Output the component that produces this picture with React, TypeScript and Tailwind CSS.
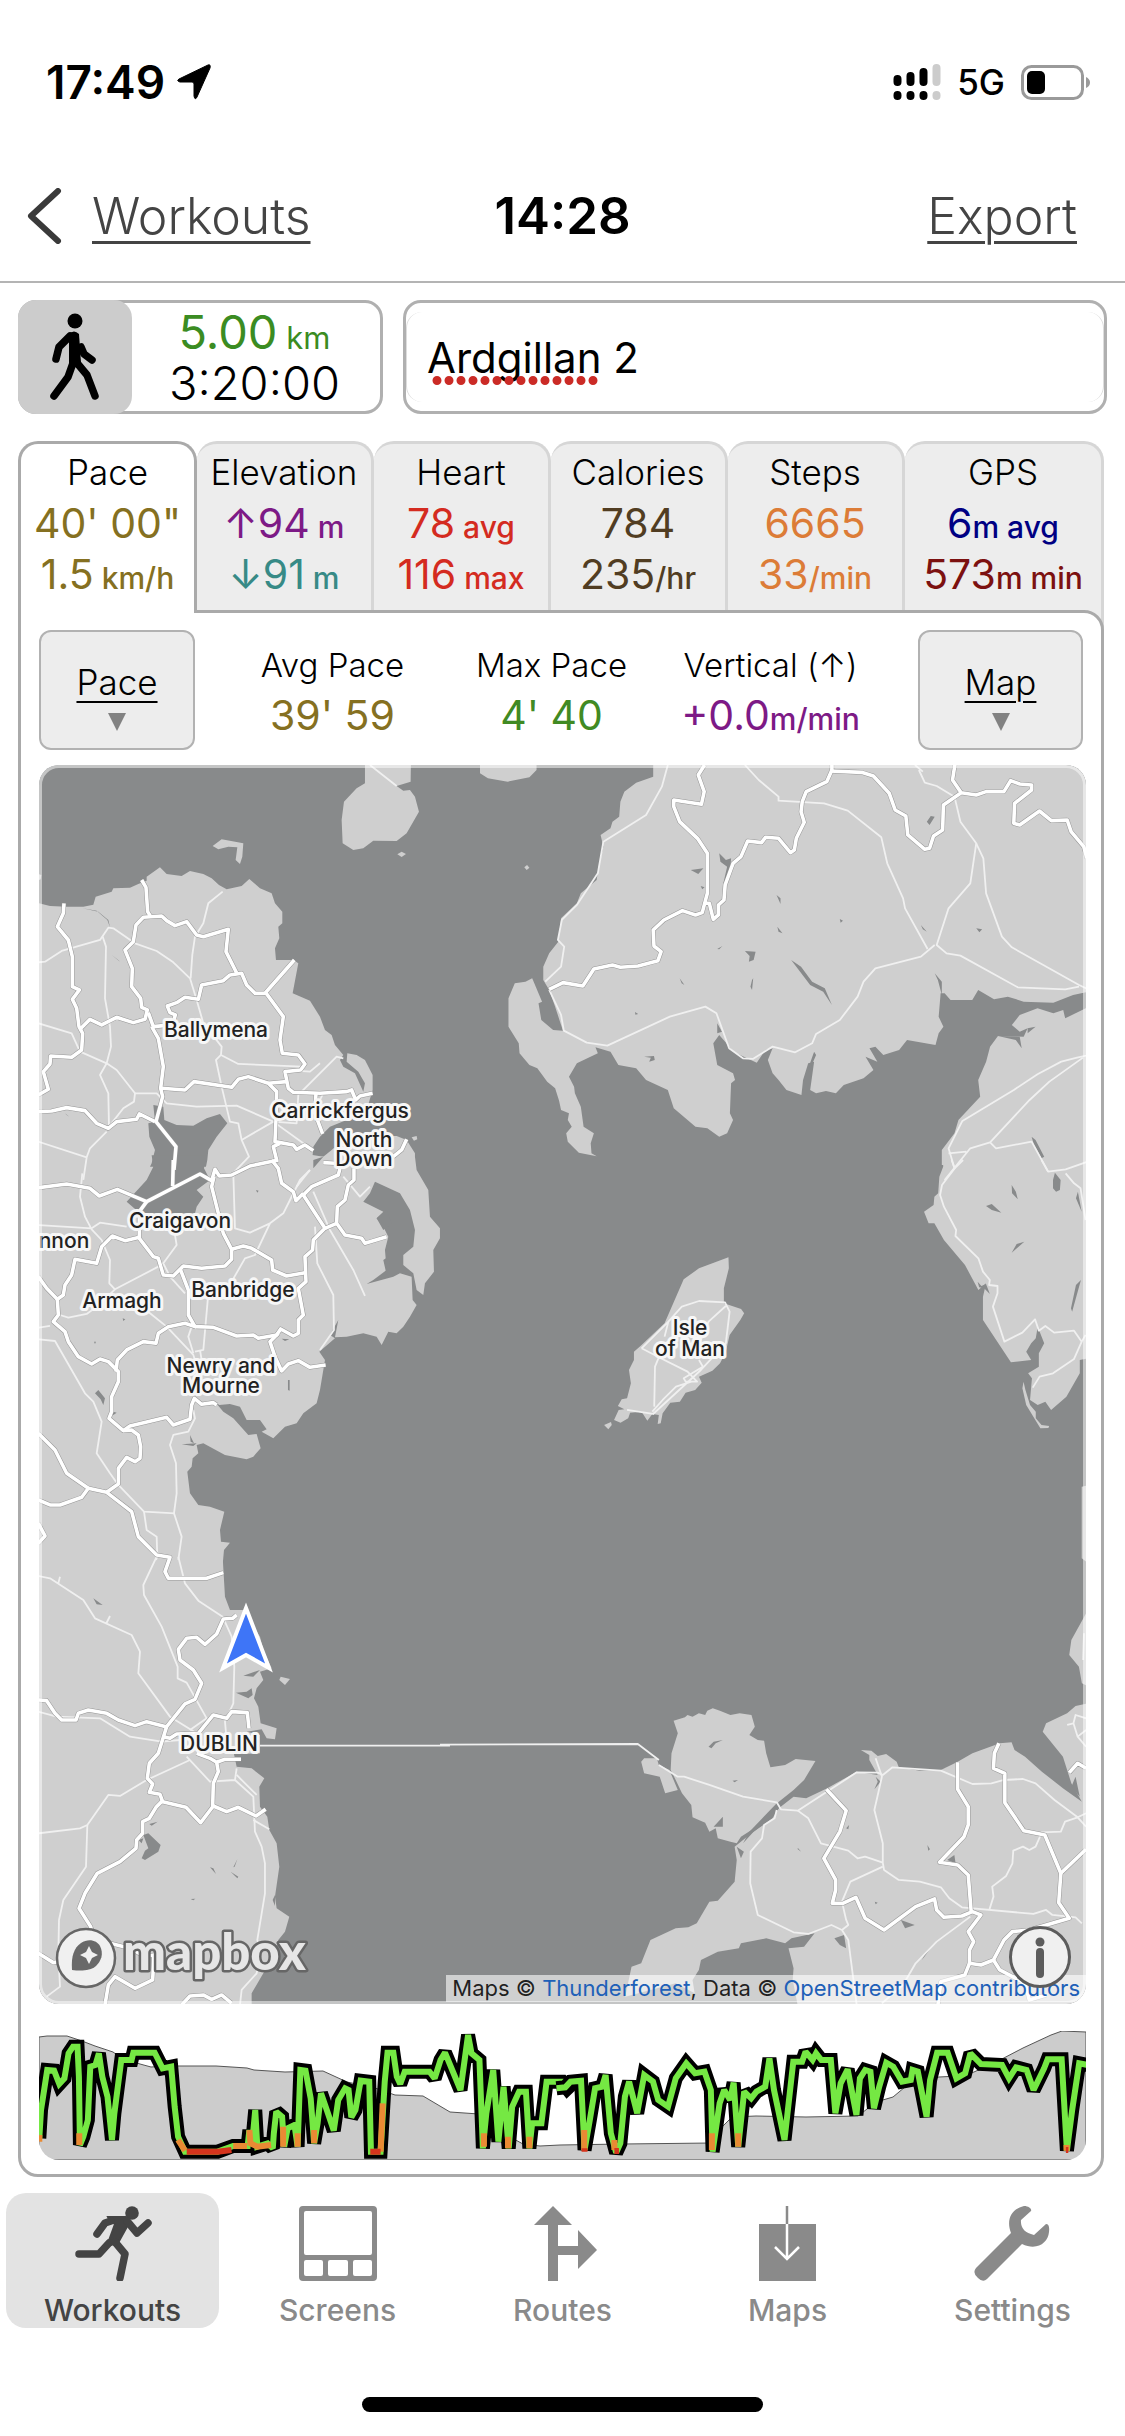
import type { ReactNode } from "react";

const tabs = [
  { title: "Pace", rows: [["40' 00\"", ""], ["1.5", " km/h"]], colors: ["text-[#857021]", "text-[#857021]"] },
  { title: "Elevation", rows: [["↑94", " m"], ["↓91", " m"]], colors: ["text-[#7d1a86]", "text-[#378a86]"] },
  { title: "Heart", rows: [["78", " avg"], ["116", " max"]], colors: ["text-[#d42b20]", "text-[#d42b20]"] },
  { title: "Calories", rows: [["784", ""], ["235", "/hr"]], colors: ["text-[#513d22]", "text-[#513d22]"] },
  { title: "Steps", rows: [["6665", ""], ["33", "/min"]], colors: ["text-[#dc7c37]", "text-[#dc7c37]"] },
  { title: "GPS", rows: [["6", "m avg"], ["573", "m min"]], colors: ["text-[#000083]", "text-[#7c1110]"] },
];

const stats = [
  { title: "Avg Pace", value: "39' 59", unit: "", color: "text-[#857021]" },
  { title: "Max Pace", value: "4' 40", unit: "", color: "text-[#418a23]" },
  { title: "Vertical (↑)", value: "+0.0", unit: "m/min", color: "text-[#7d1a86]" },
];

const places = [
  { name: "Ballymena", x: 177, y: 272 },
  { name: "Carrickfergus", x: 301, y: 353 },
  { name: "North", x: 325, y: 382 },
  { name: "Down", x: 325, y: 401 },
  { name: "Craigavon", x: 141, y: 463 },
  { name: "nnon", x: 25, y: 483 },
  { name: "Armagh", x: 83, y: 543 },
  { name: "Banbridge", x: 204, y: 532 },
  { name: "Newry and", x: 182, y: 608 },
  { name: "Mourne", x: 182, y: 628 },
  { name: "DUBLIN", x: 180, y: 986 },
  { name: "Isle", x: 651, y: 570 },
  { name: "of Man", x: 651, y: 591 },
];

// the map is drawn in tiles, each with its own grid
type Tile = { transform: string; land: string[]; water: string[]; minor: string[]; major: string[] };

const tiles: Tile[] = [
  {
    // Antrim and Kintyre
    transform: "translate(-9 -5) scale(0.3333)",
    land: [
      "M20 428 60 438 110 440 160 440 190 434 197 410 245 395 250 385 300 383 325 372 350 362 350 350 390 322 410 342 455 348 480 333 520 342 545 355 567 375 590 388 635 378 658 357 690 385 725 400 735 430 757 455 757 490 745 500 748 535 735 565 738 600 790 600 805 610 788 700 840 722 870 770 885 810 905 825 915 855 940 885 930 900 940 920 975 940 1000 995 1005 970 985 935 950 905 952 880 980 885 1005 900 1028 945 1028 990 1010 1050 950 1080 900 1100 870 1130 850 1160 848 1185 880 1190 905 1170 950 1130 1100 1128 1130 1140 1155 1180 1155 1215 20 1215Z",
      "M1005 0 1005 70 980 85 942 125 935 180 938 250 970 270 1000 265 1030 242 1100 243 1130 220 1167 155 1155 110 1140 90 1120 92 1100 78 1142 65 1143 0Z",
      "M548 258 575 238 640 250 637 290 630 312 617 300 622 262 595 260 565 268Z",
      "M1102 283 1115 275 1128 282 1115 291Z",
      "M1145 1132 1160 1128 1162 1138 1152 1142Z",
      "M20 340 34 345 32 358 20 362Z",
    ],
    water: [
      "M370 1035 400 1040 403 1080 440 1095 490 1097 530 1075 570 1062 592 1090 560 1130 535 1170 532 1200 528 1220 360 1220 365 1210 375 1170 358 1130 355 1090 375 1085Z",
      "M158 445 205 455 235 480 240 502 232 480 200 452Z",
      "M245 585 270 605 265 600ZM105 1060 118 1070 110 1065ZM850 1200 880 1190 850 1225Z",
    ],
    minor: [
      "M25 607 45 605 95 573 210 540 235 503 250 505 315 550 380 573 430 607 480 655 500 720 520 790 575 860 573 885 625 912 815 920",
      "M578 395 535 430 520 490 495 530 487 585 482 655",
      "M218 530 228 560 225 715 240 800 243 860 230 910 210 945 235 1000 237 1100",
      "M25 790 125 820 150 875 230 910 260 930 315 1000 312 1025 280 1045 237 1100",
      "M315 1000 380 1000 410 1030 500 1040 620 1037 730 1085 820 1150",
      "M573 885 558 900 575 980 600 1085 625 1090 635 1140 657 1190 600 1250",
      "M635 1140 730 1085 800 1090 805 1005 920 890 940 895",
      "M25 1145 170 1192 180 1165 230 1115M170 1192 160 1260",
      "M765 930 840 935 870 910M880 1000 870 1020M1020 15 1100 78",
    ],
    major: [
      "M102 430 100 460 82 500 115 540 127 590 127 680 148 690 127 718 140 745 147 800 158 820 155 870 125 892 62 888 60 912 40 935 55 988 25 1005",
      "M150 808 180 778 215 795 260 772 310 788 345 778 352 750 335 742 332 715 305 680 307 625 285 570 310 545 318 495 340 472 395 468 410 482 435 497 470 485 500 525 520 530 595 508 588 575 622 643",
      "M335 360 348 382 353 455 362 470",
      "M355 758 370 800 400 797M365 800 385 835 400 920 392 985 398 1010 378 1085 438 1160 432 1230",
      "M25 1055 65 1053 110 1043 165 1052 200 1090 235 1105 260 1085 320 1078 328 1062 375 1085",
      "M432 780 436 765 420 758 412 738 440 728 465 712 505 718 515 675 580 662 600 645 635 640 650 675 675 700 705 700 793 600",
      "M705 695 760 770 750 840 757 880 805 885 825 912 812 930 765 935 775 985 790 997 870 1000 950 995 965 990 977 1020 990 1008 1028 1000",
      "M395 985 465 990 492 965 605 982 625 958 655 950 715 970 740 995 738 1080 735 1145 790 1155 800 1168 825 1155 850 1172",
      "M715 970 770 965M858 1000 855 1060 878 1122M750 1150 730 1160 740 1200",
      "M1130 1138 1115 1170 1090 1190M880 1208 915 1210",
    ],
  },
  {
    // Armagh, Down and Louth
    transform: "translate(-9 395) scale(0.3333)",
    land: [
      "M20 -10 1155 -10 1160 30 1195 90 1200 170 1230 205 1230 235 1210 270 1212 335 1185 370 1180 405 1160 390 1150 340 1120 315 1120 285 1150 260 1155 210 1140 150 1110 100 1035 65 1020 100 1000 125 1060 155 1040 175 1060 200 1075 230 1065 270 1070 330 1030 360 1010 372 1090 350 1110 340 1145 350 1148 420 1160 435 1140 470 1120 500 1100 520 1075 515 1055 555 1040 530 1000 520 950 530 915 532 925 480 900 525 915 535 868 575 885 600 870 690 860 730 820 760 800 790 765 800 730 835 695 815 710 808 690 780 650 780 630 740 600 732 568 735 555 725 580 755 610 775 655 825 680 822 692 865 670 890 650 898 585 885 520 850 500 855 505 880 488 895 485 920 472 935 480 1000 505 1035 540 1040 583 1055 570 1110 573 1145 600 1148 582 1170 578 1215 20 1215Z",
    ],
    water: [
      "M365 -14 370 20 350 60 290 125 330 160 495 160 500 140 520 110 500 90 540 60 522 25 530 -14Z",
      "M195 700 205 690 225 715 220 735 212 718ZM240 752 260 758 250 765ZM125 775 150 782ZM480 825 492 850 482 845ZM455 853 500 850 490 858ZM755 536 778 538 765 543Z",
      "M1040 175 1070 150 1085 190 1060 210ZM1060 300 1075 290 1080 320 1070 345ZM774 660 779 660 779 692 774 690Z",
      "M278 475 286 478 280 483ZM678 90 686 92 682 98ZM192 545 198 545 195 552ZM465 240 478 235ZM550 240 558 236Z",
    ],
    minor: [
      "M157 40 150 110 165 170 185 208 215 240 240 300 238 370 255 388 200 440 170 462 115 473 90 465M25 195 185 205 210 188 290 200",
      "M255 388 385 320 400 310 440 255 435 225M400 310 420 350 465 400M290 410 360 460 410 500 490 585 495 600M485 500 475 530 490 580M535 400 520 570 495 575M510 570 515 600",
      "M610 40 615 205 660 218 720 190 760 160 780 120 810 60 840 30M720 190 675 285 645 295 605 365",
      "M850 95 900 210 970 330 1005 408M855 200 862 310 910 405 912 510 870 570",
      "M25 503 60 498M25 538 75 543 165 700 190 725 215 785 200 880 240 940 265 975 342 1055 435 1060",
      "M490 750 495 775 475 815 430 825 420 855 438 910 440 1000 432 1060 455 1130 445 1200",
      "M342 1055 350 1110 380 1130 382 1190 378 1200M940 50 990 110 1020 80M800 80 840 30",
    ],
    major: [
      "M25 83 110 72 180 85 208 108 262 88 350 125 510 42 545 62 555 28 568 48 605 45 660 18 745 0",
      "M430 0 428 78M350 125 328 155 328 235 370 290 385 295 400 345 430 348 460 318 515 325 585 318 605 298 605 268 580 220 560 140 545 80 552 50",
      "M328 232 285 242 247 228 215 260 200 310 135 298 125 345 105 375 100 405 82 418 85 465 70 485 105 515 115 545 145 590 185 612 210 597 235 605 265 635 265 665 245 710 245 755 237 775 280 812 300 798 410 772 430 795 480 778 485 735 493 715 515 733 550 728 560 735",
      "M25 350 50 385 82 418M450 325 475 390 475 465 495 500 465 490 415 500 385 520 378 550 340 545 290 570 262 600 258 635",
      "M495 500 550 502 620 528 670 525 685 535 740 525 752 507 790 528 805 520 805 480 820 465 805 385 828 365 825 290 848 270 850 240 885 205 820 105 845 80 925 45 930 25",
      "M605 268 640 258 665 265 725 300 728 330 770 348 825 338M725 0 745 25 755 70 790 95 798 122 820 100",
      "M885 205 920 190 945 225 995 235 1005 250 1070 230M920 190 922 140 945 120 955 75 972 60 972 25",
      "M745 520 720 545 735 590 755 633 775 612 805 602 840 622 887 615M280 812 305 810 325 825 332 860 330 895 315 905 290 892 265 925 265 972 230 997 175 985 155 1012 90 1035 60 1035 25 1020",
      "M25 820 75 870 110 940 175 985M230 997 305 1055 325 1130 380 1185 420 1192 405 1235 415 1255 530 1255 580 1238M25 1090 45 1128 25 1150",
    ],
  },
  {
    // Dublin
    transform: "translate(-9 795) scale(0.3333)",
    land: [
      "M20 -10 578 -10 585 110 600 150 640 150 690 230 700 270 725 325 690 335 700 360 680 385 672 415 685 440 692 490 740 505 735 538 710 535 695 508 650 515 690 525 690 580 612 582 620 620 665 625 703 655 688 680 690 740 712 770 718 810 740 850 748 920 735 1010 740 1045 778 1070 765 1115 745 1140 735 1180 700 1240 665 1300 665 1340 20 1340Z",
      "M748 360 752 350 780 357 765 375Z",
    ],
    water: [
      "M340 825 355 820 392 855 385 875 345 900 335 895 345 872 355 865ZM325 840 340 835 335 850ZM358 792 383 785 365 797Z",
      "M640 347 690 330 670 350ZM618 398 650 395 665 385 668 405 655 415ZM540 922 550 925 558 942ZM602 935 625 950 622 955ZM610 922 622 898 614 920ZM482 1017 496 1016 490 1021ZM133 272 150 277ZM190 115 218 135 200 133ZM735 1005 728 1020 735 1038Z",
    ],
    minor: [
      "M25 48 60 55 160 120 195 175 305 225 330 275 325 340 420 470 500 520M90 50 85 70M240 168 228 192",
      "M380 -10 340 75 342 105 395 200 443 320 443 355 470 368 530 475 480 510",
      "M445 -10 465 70 505 122 578 170 605 230 613 320 610 430 585 485 590 540",
      "M25 455 80 470 210 475 300 530 395 545 450 540M480 600 350 660 270 708 235 705 172 795 150 805 25 820",
      "M172 795 168 920 100 1020 87 1080 85 1180 90 1280 50 1310M470 590 540 665 615 660 620 625M615 660 670 710 675 815 695 860 705 910 705 1000 682 1140 690 1170 680 1240 635 1290 630 1335",
      "M690 557 1260 557M620 645 680 705M670 780 718 808",
    ],
    major: [
      "M620 165 608 175 580 177 560 222 525 253 500 232 470 235 445 268 450 300 490 330 515 370 495 418 465 432 410 500 385 580 358 610 352 655 368 672 358 697 390 703 398 725 468 742 512 788 550 738 590 755 625 742 678 768 707 748",
      "M25 420 50 422 75 460 95 480 138 480 145 460 175 450 230 460 265 480 315 497 350 485 408 500",
      "M400 530 420 535 440 522 505 520 550 465 590 475 605 455 652 458 657 505M500 580 540 595 560 607 565 635 550 670 548 740M560 607 585 598 633 598",
      "M398 722 378 742 358 775 338 785 338 820 320 840 318 865 270 905 202 940 165 1000 147 1045 182 1100 190 1130 240 1150 300 1165 345 1190 372 1185 368 1260 315 1285 255 1250 235 1275 225 1335",
      "M25 1180 70 1208 160 1195M455 1335 480 1308 520 1305 545 1318 575 1305 605 1330",
    ],
  },
  {
    // Galloway and north Cumbria
    transform: "translate(441 -5) scale(0.3954 0.3333)",
    land: [
      "M438 0 438 50 395 68 365 95 355 125 352 170 335 185 330 205 305 225 312 260 300 320 295 360 255 400 245 430 205 475 198 545 175 580 160 620 160 660 175 690 190 740 205 795 210 812 185 810 155 780 148 730 157 725 132 655 115 665 88 670 72 715 72 800 98 850 100 880 125 915 145 925 170 965 190 985 200 1022 205 1050 225 1060 222 1080 232 1100 218 1120 222 1145 250 1178 295 1189 282 1180 280 1150 288 1120 262 1100 255 1040 240 1000 238 980 225 950 245 910 298 880 292 862 330 875 350 915 395 925 420 960 475 990 490 1045 545 1100 575 1105 605 1130 625 1120 640 1080 632 1060 635 970 645 960 640 940 600 915 590 850 605 825 620 845 640 875 700 908 722 870 740 865 728 900 740 940 755 960 775 990 813 1005 817 960 830 910 845 905 835 990 850 1000 875 993 900 1000 920 975 970 955 995 930 975 890 1005 905 985 865 1000 860 1020 885 1060 870 1080 840 1152 855 1160 820 1172 800 1160 770 1165 700 1175 700 1190 720 1245 720 1260 690 1300 718 1335 710 1375 725 1450 728 1500 705 1560 690 1560 0Z",
      "M1560 735 1532 745 1480 775 1475 750 1450 760 1410 745 1365 765 1345 795 1365 815 1385 805 1375 830 1310 828 1290 860 1280 905 1260 960 1265 1010 1210 1080 1200 1120 1168 1170 1168 1215 1560 1215Z",
      "M0 40 20 55 70 65 125 52 143 30 143 0 0 0ZM112 322 119 315 125 323 118 330Z",
    ],
    water: [
      "M605 280 622 300 635 295 633 335 615 372 625 320 608 305ZM533 330 565 325 552 342ZM558 378 568 382 562 388ZM670 573 697 575 692 600 680 605 682 588ZM600 567 613 558 605 568Z",
      "M787 600 812 620 840 665 872 685 890 735 868 695 835 675ZM845 875 850 885 830 940 836 905ZM1130 185 1140 168 1150 170 1137 195ZM1115 495 1130 515 1120 508ZM1150 640 1168 665 1168 705 1158 660ZM750 405 760 415 760 432Z",
      "M910 477 918 482 912 488ZM1255 505 1270 508 1263 517ZM505 655 517 675 510 670ZM688 660 691 655 688 690 684 680ZM415 890 440 888 442 900 428 905 432 893ZM392 756 400 762 393 764ZM1395 1130 1405 1140 1427 1190 1420 1195 1400 1150ZM1310 828 1365 830 1370 865 1355 840ZM1385 805 1405 800 1385 820ZM752 500 765 520 755 515ZM600 790 612 815 600 820Z",
    ],
    minor: [
      "M475 15 460 80 420 165 312 245 298 340 245 435 207 480 197 540 213 560 205 620 165 665M175 690 205 765 212 812 270 848 322 857 480 770 570 740 598 760 630 865 665 895 690 897 740 860 797 877 840 850 850 822 910 780 955 710 970 665 1000 625 1115 590 1150 555",
      "M670 15 705 60 755 110 755 122 870 130 930 152 1015 232 1030 310 1070 415 1075 445 1132 567M1110 30 1125 68 1155 78 1200 110 1215 185 1255 250 1240 370 1185 445 1155 555 1180 580 1215 587 1360 682 1480 688 1515 680",
      "M1255 250 1273 295 1280 400 1320 530 1345 562 1515 675 1560 700M1100 15 1120 35",
      "M1560 880 1510 893 1470 905 1410 943 1350 990 1220 1083 1185 1165 1200 1225M1525 893 1440 965 1390 1020 1290 1147 1305 1165 1395 1145 1437 1235M1290 1147 1240 1165 1175 1260M1185 1180 1230 1175",
    ],
    major: [
      "M568 15 552 45 567 95 560 133 490 120 490 140 505 185 550 235 575 280 575 400 562 458 545 465 512 452 465 480 438 510 440 558 458 575 450 602 400 618 355 622 335 615 288 627 260 678 210 668 175 688",
      "M890 0 890 30 877 65 825 95 815 125 812 155 820 187 800 235 795 270 785 278 755 235 722 232 712 248 677 243 660 290 640 310 620 375 617 420 603 435 603 465 590 478 580 430 567 430",
      "M885 33 965 37 995 48 1035 100 1050 150 1077 168 1082 225 1125 268 1137 265 1147 228 1170 210 1172 135 1217 98 1255 105 1280 95 1325 95 1342 62 1365 72 1395 75 1395 90 1352 130 1350 190 1365 195 1415 153 1445 182 1485 180 1495 215 1527 260 1535 295M1203 0 1195 60 1217 98",
    ],
  },
  {
    // Isle of Man and the Lake District
    transform: "translate(461 395) scale(0.3827 0.3333)",
    land: [
      "M1158 -10 1158 20 1148 50 1145 100 1135 110 1133 135 1108 155 1120 190 1135 190 1160 240 1215 315 1250 390 1270 370 1262 410 1262 480 1335 607 1365 603 1388 600 1375 575 1388 550 1400 535 1405 500 1422 550 1408 580 1408 620 1380 640 1390 655 1385 720 1405 735 1425 725 1440 750 1480 710 1515 640 1515 600 1560 590 1560 -10Z",
      "M1368 665 1373 690 1385 735 1400 755 1400 775 1415 795 1435 798 1433 804 1412 805 1375 735 1365 685Z",
      "M1520 980 1560 970 1560 1230 1520 1195Z",
      "M597 292 598 325 585 385 585 430 630 447 638 460 628 480 600 525 590 575 575 610 555 632 520 650 527 668 510 690 485 698 470 725 445 728 425 760 420 790 412 792 415 765 398 762 385 782 370 755 340 758 335 775 315 788 298 780 310 750 325 748 308 738 318 718 332 715 342 670 337 630 350 600 350 575 370 555 430 490 480 358 520 325Z",
      "M272 795 290 786 292 795 283 808Z",
    ],
    water: [
      "M1450 38 1465 60 1463 90 1453 95 1445 85 1445 60ZM1337 75 1348 95 1353 118 1338 100ZM1270 138 1285 132 1310 158 1285 150ZM1365 128 1382 142ZM1337 278 1350 252 1370 245ZM1510 95 1520 155 1505 115ZM1518 360 1495 455 1492 445 1505 375ZM1248 365 1258 378 1270 372 1280 402 1265 385 1252 382ZM1300 58 1313 68Z",
    ],
    minor: [
      "M1180 0 1188 25 1155 75 1150 105 1160 140 1192 210 1190 228 1250 295 1262 335 1280 360 1278 375 1300 378 1300 400 1288 440 1318 545 1365 518 1398 478 1408 512 1425 498 1448 518 1500 512 1520 545 1530 525M1520 545 1500 597 1445 640 1410 650 1392 683",
      "M1188 25 1210 0M1415 0 1432 35 1478 28 1535 5M1478 40 1500 70 1517 85 1530 180",
      "M370 565 440 485 475 440 520 423 588 427 600 455 590 550 525 630 400 762 332 750M370 565 415 592 490 635 515 665 485 665 480 655 530 620 520 600M590 438 545 485 525 540M415 592 405 620 403 740M440 485 430 530M398 755 425 720 460 680 500 665",
    ],
    major: [],
  },
  {
    // Anglesey and north Wales
    transform: "translate(401 815) scale(0.4209 0.3333)",
    land: [
      "M555 422 582 412 588 405 600 410 615 400 630 405 635 392 648 385 665 392 690 405 712 400 740 405 748 440 735 465 755 480 770 482 775 520 785 562 820 555 845 537 892 543 865 600 840 630 805 665 775 715 740 750 715 770 705 790 690 785 660 775 655 745 640 755 630 728 600 712 597 675 575 640 560 600 548 570 550 520 565 460Z",
      "M478 545 485 535 515 535 520 555 545 570 555 600 565 630 535 640 522 590 485 580Z",
      "M700 800 740 760 790 715 805 685 840 650 870 655 920 625 990 575 1040 585 1020 540 1020 525 1000 510 1025 512 1040 528 1060 522 1085 545 1090 562 1140 572 1190 570 1230 545 1265 520 1330 490 1358 487 1365 510 1390 530 1430 575 1480 625 1525 665 1500 610 1480 530 1432 455 1440 430 1490 400 1510 378 1560 365 1560 1290 852 1290 838 1200 840 1165 828 1105 865 1100 890 1060 835 1075 820 1090 775 1075 715 1090 710 1105 660 1115 620 1140 615 1170 600 1200 605 1240 560 1210 440 1250 455 1160 478 1150 500 1080 560 1045 590 1042 610 1030 640 965 660 962 700 905 705 840Z",
      "M1560 70 1535 100 1500 180 1495 225 1518 260 1525 310 1560 330Z",
    ],
    water: [
      "M638 500 650 485 672 480 655 490 645 505ZM800 670 815 672 765 735 745 755 720 790 735 755ZM705 800 722 815 715 835ZM1035 590 1047 605 1032 628 1040 605ZM937 1075 960 1065 965 1105 950 1095ZM1095 1020 1128 1035 1105 1045ZM1175 1090 1145 1140 1155 1115ZM1205 840 1222 825 1225 850ZM650 740 672 710 672 740Z",
      "M850 803 858 815 850 808ZM820 860 828 868ZM1158 795 1164 808 1160 812ZM965 745 972 735 970 748ZM695 602 708 600 700 607ZM1033 965 1040 968 1035 973ZM1510 590 1520 650 1500 620Z",
    ],
    minor: [
      "M0 494 470 492 520 540M520 555 565 590 580 590 640 615 720 650 800 667 810 688 850 692 990 577 1040 578 1052 585 1075 562 1190 572 1265 612 1310 610 1340 600 1385 597 1415 610 1460 660 1515 712 1535 740",
      "M800 690 795 715 770 735 765 775 738 815 737 910 755 1005 840 1057 875 1062 930 1035 955 1050 970 1080 990 1275",
      "M850 692 875 715 905 790 970 812 992 835 1010 830 1052 848 1052 790 1032 690 1050 590 1035 535M1052 848 1055 870 1090 900 1140 905 1190 922 1210 955 1240 982 1410 1002 1440 990 1455 1005 1510 1012 1525 1030",
      "M1052 860 975 905 955 965 965 1020 970 1035 955 1050M1260 1010 1180 1085 1130 1150 1100 1215 1050 1270",
      "M1535 700 1515 712 1485 725 1475 755 1430 757 1415 800 1400 810 1385 800 1362 812 1360 850 1345 888 1312 920 1315 950 1305 990M1490 435 1505 430 1510 405 1535 415M1505 430 1515 470 1535 500M1515 470 1535 450M1530 160 1528 240",
    ],
    major: [
      "M918 628 965 692 950 755 912 835 940 900 940 930 932 970 957 970 988 952 1010 1015 1055 1050 1130 980 1175 957 1180 990 1197 1012 1240 1008 1265 995 1285 1005 1255 1055 1268 1085 1258 1110 1258 1150 1285 1155 1315 1140 1340 1080 1360 1055 1400 1050 1495 1015 1470 968 1475 880 1437 765 1387 752 1342 668 1342 580 1315 565 1317 520 1328 490",
      "M1230 547 1230 628 1255 680 1255 735 1245 770 1187 847 1230 855 1255 885 1262 995M1475 880 1535 808M1258 1150 1247 1185 1190 1205 1183 1275M1315 1140 1330 1170 1390 1210 1400 1260 1440 1245M1495 578 1515 550 1535 565",
    ],
  },
];

type Layer = "land" | "water" | "minor" | "major";

function MapLayer({ layer }: { layer: Layer }) {
  return (
    <>
      {tiles.map((tile) => (
        <g key={tile.transform} transform={tile.transform}>
          {tile[layer].map((d) => <path key={d} d={d} vectorEffect="non-scaling-stroke" />)}
        </g>
      ))}
    </>
  );
}

function RouteMap() {
  return (
    <div className="relative mt-[15px] overflow-hidden rounded-[20px]">
      <svg viewBox="0 0 1047 1239" className="block w-full bg-[#888a8b]" strokeLinejoin="round" role="img" aria-label="Map">
        <g fill="#cfcfcf"><MapLayer layer="land" /></g>
        <g fill="#888a8b"><MapLayer layer="water" /></g>
        <g fill="none" stroke="#f0f0f0" strokeWidth="1.8"><MapLayer layer="minor" /></g>
        <g fill="none" stroke="#969696" strokeWidth="4.6"><MapLayer layer="major" /></g>
        <g fill="none" stroke="#fff" strokeWidth="3.6"><MapLayer layer="major" /></g>
        <g
          className="font-['Inter',sans-serif] text-[21px] font-medium"
          fill="#222"
          stroke="#f7f7f7"
          strokeWidth="6"
          textAnchor="middle"
          style={{ paintOrder: "stroke" }}
        >
          {places.map((p) => <text key={p.name} x={p.x} y={p.y}>{p.name}</text>)}
        </g>
        {/* current position */}
        <path d="M207 843 230 903 207 890 184 903Z" fill="#3e75f7" stroke="#fff" strokeWidth="4" strokeLinejoin="miter" />
        {/* mapbox mark */}
        <circle cx="47" cy="1193" r="29" fill="#f0f0f0" stroke="#666" strokeWidth="2.5" />
        <path d="M33 1205C32 1191 35 1183 42 1178C49 1173 58 1175 61 1181C65 1189 62 1196 57 1201C51 1206 42 1206 33 1205Z" fill="#696969" />
        <path d="M50 1181 53 1187 59 1190 53 1193 50 1199 47 1193 41 1190 47 1187Z" fill="#f0f0f0" />
        <text
          x="84"
          y="1205"
          className="font-['Lato',sans-serif] text-[51px] font-black"
          fill="#e6e6e6"
          stroke="#666"
          strokeWidth="5"
          style={{ paintOrder: "stroke" }}
        >
          mapbox
        </text>
      </svg>
      <div className="absolute right-0 bottom-[2px] bg-white/60 px-[6px] text-[22px] leading-[27px] whitespace-nowrap text-black/85">
        Maps © <a href="#thunderforest" className="text-[#2060b8]">Thunderforest</a>, Data ©{" "}
        <a href="#openstreetmap" className="text-[#2060b8]">OpenStreetMap contributors</a>
      </div>
      <button type="button" aria-label="Map information" className="absolute right-[15px] bottom-[16px] size-[62px]">
        <svg viewBox="0 0 62 62">
          <circle cx="31" cy="31" r="29.5" fill="#f0f0f0" stroke="#5c5c5c" strokeWidth="3" />
          <circle cx="31" cy="16" r="4.5" fill="#5c5c5c" />
          <path d="M31 26V48" stroke="#5c5c5c" strokeWidth="8" strokeLinecap="round" />
        </svg>
      </button>
      <div className="pointer-events-none absolute inset-0 rounded-[20px] border-[3px] border-white/50" />
    </div>
  );
}

// first and second half of the recorded pace
const paceHalves = [
  {
    transform: "translate(-9 -21) scale(0.3444 0.3333)",
    line: "M27 385 32 300 50 180 70 182 85 222 100 205 112 130 125 110 138 110 142 200 145 405 155 380 168 330 175 170 190 165 200 130 210 200 225 260 238 390 245 310 265 150 295 150 300 128 362 128 385 175 410 170 420 290 430 380 450 425 545 425 590 408 632 408 637 360 645 400 654 300 660 410 690 400 705 415 708 370 715 305 732 320 738 410 748 355 768 345 777 410 785 180 800 182 815 265 825 400 835 340 845 250 865 310 882 362 895 270 915 235 925 240 933 322 945 300 960 212 985 215 990 425 1018 425 1030 215 1038 128 1055 128 1065 200 1075 222 1088 185 1160 185 1175 205 1192 150 1205 128 1250 240 1272 75 1282 130 1305 150 1315 415 1325 310 1345 180 1360 395 1375 230 1390 415 1400 290 1420 245 1440 245 1450 415 1458 340 1485 340 1500 215 1545 215 1560 235 1580 215",
    slow: "M143 370V405M825 360V400M777 370V410M1388 380V415M1450 380V415M1318 370V410M735 350V410M27 375V395M637 360 640 400 660 410 700 405M430 390 450 422M590 408H630M1018 425 1024 280",
    stopped: "M455 425H545L585 420M988 425H1018",
  },
  {
    transform: "translate(521 -21) scale(0.3508 0.3333)",
    line: "M-10 235 15 232 30 215 60 212 70 420 85 330 100 235 120 230 130 195 145 370 160 428 172 400 185 260 197 215 220 310 240 195 265 215 280 270 308 290 330 205 360 160 385 190 412 185 430 240 435 425 455 280 468 240 485 270 495 218 508 410 525 245 545 265 560 245 585 230 597 145 610 240 640 390 665 155 690 155 700 125 720 150 730 130 745 150 772 150 785 310 800 220 820 178 845 315 855 205 870 180 885 185 895 295 910 230 930 158 950 170 975 215 1000 210 1005 180 1020 185 1045 320 1055 210 1075 128 1105 128 1130 205 1155 190 1170 130 1200 162 1260 165 1280 205 1300 172 1330 180 1350 240 1380 175 1390 148 1430 148 1445 422 1460 300 1480 160 1505 165",
    slow: "M69 360V420M155 390V420M433 370V420M508 370V410M1444 405V422",
    stopped: "M155 423H168M1442 420H1449M70 415V425",
  },
];

function PaceChart() {
  const stroke = (d: string, color: string, width: number) => (
    <path d={d} fill="none" stroke={color} strokeWidth={width} strokeMiterlimit="2" vectorEffect="non-scaling-stroke" />
  );
  return (
    <svg viewBox="0 0 1047 129" className="mt-[27px] block w-full rounded-b-[20px]" role="img" aria-label="Pace and elevation chart">
      <path
        d="M0 6 8 5 28 5 43 10 56 15 74 21 81 26 101 33 112 36 129 35 177 35 208 37 215 39 246 41 284 40 308 51 336 57 356 64 384 65 411 81 440 83 460 95 473 107 484 113 501 115 521 114 584 113 672 112 682 97 693 86 717 85 767 86 819 85 837 71 854 66 872 51 900 46 920 45 935 41 961 29 984 17 1012 4 1023 0 1047 1V129H0Z"
        fill="#ccc"
        stroke="#555"
        strokeWidth="1"
      />
      {paceHalves.map((half) => (
        <g key={half.transform} transform={half.transform}>
          {stroke(half.line, "#000", 14)}
          {stroke(half.line, "#75e843", 6)}
          {stroke(half.slow, "#e98a34", 6)}
          {stroke(half.stopped, "#d5341d", 6)}
        </g>
      ))}
    </svg>
  );
}

function Selector({ label, className }: { label: string; className: string }) {
  return (
    <button
      type="button"
      aria-haspopup="listbox"
      className={`flex h-[120px] flex-col items-center rounded-xl border-2 border-[#b2b2b2] bg-[#ededed] pt-[29px] ${className}`}
    >
      <span className="text-[35px] leading-[42px] font-light underline decoration-2 underline-offset-[6px]">{label}</span>
      <span aria-hidden="true" className="mt-[10px] border-x-[9px] border-t-[18px] border-x-transparent border-t-[#828282]" />
    </button>
  );
}

const navItems: { label: string; icon: ReactNode }[] = [
  {
    label: "Workouts",
    icon: (
      <>
        <circle cx="58" cy="7" r="6.8" fill="currentColor" />
        <path d="M34 11H52L55 17 44 37 33 40 41 18 36 15Z" fill="currentColor" stroke="currentColor" strokeWidth="2" />
        <path d="M37 15 31 17 23 28M53 15 63 27 74 17M35 37 25 48H5M41 36 51 48 46 72" fill="none" stroke="currentColor" strokeWidth="7.5" strokeLinecap="round" strokeLinejoin="round" />
      </>
    ),
  },
  {
    label: "Screens",
    icon: (
      <path fillRule="evenodd" d="M4 0H74Q78 0 78 4V71Q78 75 74 75H4Q0 75 0 71V4Q0 0 4 0ZM7 5Q5 5 5 7V47Q5 49 7 49H71Q73 49 73 47V7Q73 5 71 5ZM7 54Q5 54 5 56V68Q5 70 7 70H22Q24 70 24 68V56Q24 54 22 54ZM31 54Q29 54 29 56V68Q29 70 31 70H47Q49 70 49 68V56Q49 54 47 54ZM56 54Q54 54 54 56V68Q54 70 56 70H71Q73 70 73 68V56Q73 54 71 54Z" fill="currentColor" />
    ),
  },
  {
    label: "Routes",
    icon: <path d="M29 0 48 19H34V40H54V24L73 44 54 63V49H34V75H24V19H10Z" fill="currentColor" />,
  },
  {
    label: "Maps",
    icon: (
      <>
        <path d="M10 18H67V75H10Z" fill="currentColor" />
        <path d="M38 0V18" stroke="currentColor" strokeWidth="2.5" />
        <path d="M38 18V51M26 41 38 53 50 41" fill="none" stroke="#fff" strokeWidth="2.5" />
      </>
    ),
  },
  {
    label: "Settings",
    icon: <path d="M50 0C55 0 58 3 57 5L47 14Q46 26 60 29L72 18Q76 18 75 26C74 37 63 45 48 38L13 73Q9 77 4 72Q-2 67 2 62L37 27C32 14 37 3 50 0Z" fill="currentColor" />,
  },
];

export default function App() {
  return (
    <div className="bg-white font-['Inter',sans-serif] text-black">
      {/* status bar */}
      <div className="flex items-center justify-between pt-[56px] pr-[34px] pl-[46px]">
        <div className="flex items-center gap-3 text-[46px] leading-[52px] font-semibold">
          17:49
          <svg viewBox="0 0 34 36" className="w-[34px]">
            <path d="M31 1Q34 0 33 4L20 33Q18 37 17 32V20Q17 18 15 18H3Q-1 17 2 15Z" fill="currentColor" stroke="currentColor" />
          </svg>
        </div>
        <div className="flex items-center gap-4 text-[35px] leading-[52px] font-medium">
          <svg viewBox="0 0 48 36" className="w-[48px]">
            <path d="M4.500 15V18M17.500 12V18M30.500 8V18M4.500 31V32M17.500 31V32M30.500 31V32" stroke="#000" strokeWidth="8" strokeLinecap="round" />
            <path d="M43.500 4V18M43.500 31V32" stroke="#ccc" strokeWidth="8" strokeLinecap="round" />
          </svg>
          5G
          <svg viewBox="0 0 70 35" className="w-[70px]">
            <rect x="1.500" y="1.500" width="60" height="32" rx="9" fill="none" stroke="#9a9a9a" strokeWidth="3" />
            <rect x="6" y="6" width="18" height="23" rx="5" />
            <path d="M65 12Q69 14 69 17.500T65 23Z" fill="#9a9a9a" />
          </svg>
        </div>
      </div>

      <header className="grid grid-cols-3 items-center border-b-2 border-[#b4b4b4] px-[26px] pt-[77px] pb-[34px]">
        <a href="#workouts" className="flex items-center gap-[30px] text-[50px] leading-[62px] font-light text-[#444]">
          <svg viewBox="0 0 36 56" className="w-[36px]">
            <path d="M32 3 5 28 32 53" fill="none" stroke="#3a3a3a" strokeWidth="6" strokeLinecap="round" strokeLinejoin="round" />
          </svg>
          <span className="underline decoration-[3px] underline-offset-[7px]">Workouts</span>
        </a>
        <h1 className="text-center text-[51px] leading-[62px] font-semibold">14:28</h1>
        <a href="#export" className="justify-self-end pr-[22px] text-[50px] leading-[62px] font-light text-[#444]">
          <span className="underline decoration-[3px] underline-offset-[7px]">Export</span>
        </a>
      </header>

      <main className="mt-[17px] mr-[21px] ml-[18px]">
        <section className="-mr-[3px] grid grid-cols-[365fr_704fr] gap-5">
          <div className="relative flex h-[114px] rounded-[18px] border-[3px] border-[#b0b0b0]">
            <div className="-m-[3px] flex w-[114px] items-center justify-center rounded-[18px] bg-[#ccc]">
              <svg viewBox="0 0 52 88" className="w-[52px]">
                <circle cx="26" cy="8" r="7.500" />
                <path d="M20 21Q25 16 30 21L32 50H20Z" />
                <path d="M21 23 10 34 7 46M32 34 35 41 43 47M24 50 19 64 5 83M28 50 38 62 46 83" fill="none" stroke="#000" strokeWidth="7.500" strokeLinecap="round" strokeLinejoin="round" />
              </svg>
            </div>
            <div className="flex flex-1 flex-col justify-center text-center text-[47px] leading-[51px]">
              <p className="text-[#3b8c22]">
                5.00<span className="text-[31px] leading-none"> km</span>
              </p>
              <p className="font-light">3:20:00</p>
            </div>
          </div>
          <div className="relative flex h-[114px] items-center rounded-[18px] border-[3px] border-[#b0b0b0]">
            <input
              type="text"
              aria-label="Workout name"
              defaultValue="Ardgillan 2"
              spellCheck={false}
              className="h-[90px] w-full rounded-[16px] border-x border-[#ddd] bg-transparent pl-[20px] text-[42px]"
            />
            {/* spelling mark */}
            <svg viewBox="0 0 166 9" className="pointer-events-none absolute top-[73px] left-[26px] w-[166px]">
              <path d="M5 4.500H166" stroke="#cb2b26" strokeWidth="9" strokeLinecap="round" strokeDasharray="0 12" />
            </svg>
          </div>
        </section>

        <div role="tablist" className="mt-[27px] grid grid-cols-[179fr_177fr_177fr_177fr_177fr_199fr]">
          {tabs.map((tab, i) => (
            <button
              key={tab.title}
              type="button"
              role="tab"
              aria-selected={i === 0}
              className={
                i === 0
                  ? "relative z-10 -mb-[3px] rounded-t-[20px] border-[3px] border-b-0 border-[#aaa] bg-white pb-[13px]"
                  : "-mb-[20px] rounded-t-[20px] border-[3px] border-b-0 border-l-0 border-[#d6d6d6] bg-[#ededed] pb-[30px]"
              }
            >
              <span className="block pt-[3px] text-[35px] leading-[51px] font-light">{tab.title}</span>
              {tab.rows.map(([value, unit], row) => (
                <span key={row} className={`block text-[41px] leading-[51px] whitespace-nowrap ${tab.colors[row]}`}>
                  {value}
                  <span className="text-[30px] leading-none font-medium">{unit}</span>
                </span>
              ))}
            </button>
          ))}
        </div>

        <section className="relative rounded-[20px] rounded-tl-none border-[3px] border-[#aaa] bg-white pt-[17px] pr-[15px] pb-[14px] pl-[18px]">
          <div className="flex">
            <Selector label="Pace" className="w-[156px]" />
            <dl className="grid flex-1 grid-cols-3 items-center pr-[38px] pl-[28px] text-center">
              {stats.map((stat) => (
                <div key={stat.title} className="whitespace-nowrap">
                  <dt className="text-[33px] leading-[50px] font-light">{stat.title}</dt>
                  <dd className={`text-[41px] leading-[50px] ${stat.color}`}>
                    {stat.value}
                    <span className="text-[30px] leading-none font-medium">{stat.unit}</span>
                  </dd>
                </div>
              ))}
            </dl>
            <Selector label="Map" className="mr-[3px] w-[165px]" />
          </div>
          <RouteMap />
          <PaceChart />
        </section>
      </main>

      <nav className="mt-[16px] grid grid-cols-5">
        {navItems.map(({ label, icon }, i) => (
          <a
            key={label}
            href={`#${label.toLowerCase()}`}
            className={`mx-[6px] flex flex-col items-center rounded-[20px] pt-[13px] text-[30px] font-medium ${
              i === 0 ? "bg-[#e3e3e3] text-[#444]" : "text-[#8a8a8a]"
            }`}
          >
            <svg viewBox="0 0 78 75" className="w-[78px]">{icon}</svg>
            <span className="mt-[11px] leading-[36px]">{label}</span>
          </a>
        ))}
      </nav>

      <div className="mx-auto mt-[69px] mb-[24px] h-[15px] w-[401px] rounded-full bg-black" />
    </div>
  );
}
